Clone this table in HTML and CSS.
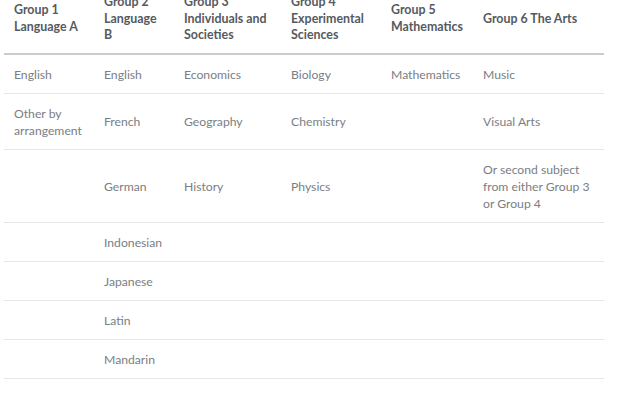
FILE: index.html
```html
<!DOCTYPE html>
<html lang="en">
<head>
<meta charset="utf-8">
<title>IB Subjects</title>
<link rel="stylesheet" href="styles.css">
</head>
<body>
<div class="page">
<table class="subjects">
  <thead>
    <tr>
      <th class="c1">Group 1 Language A</th>
      <th class="c2">Group 2 Language B</th>
      <th class="c3">Group 3 Individuals and Societies</th>
      <th class="c4">Group 4 Experimental Sciences</th>
      <th class="c5">Group 5 Mathematics</th>
      <th class="c6">Group 6 The Arts</th>
    </tr>
  </thead>
  <tbody>
    <tr><td>English</td><td>English</td><td>Economics</td><td>Biology</td><td>Mathematics</td><td>Music</td></tr>
    <tr><td>Other by arrangement</td><td>French</td><td>Geography</td><td>Chemistry</td><td></td><td>Visual Arts</td></tr>
    <tr><td></td><td>German</td><td>History</td><td>Physics</td><td></td><td>Or second subject from either Group 3 or Group 4</td></tr>
    <tr><td></td><td>Indonesian</td><td></td><td></td><td></td><td></td></tr>
    <tr><td></td><td>Japanese</td><td></td><td></td><td></td><td></td></tr>
    <tr><td></td><td>Latin</td><td></td><td></td><td></td><td></td></tr>
    <tr><td></td><td>Mandarin</td><td></td><td></td><td></td><td></td></tr>
  </tbody>
</table>
</div>
</body>
</html>
```

FILE: styles.css
```css
html, body {
  margin: 0;
  padding: 0;
  background: #ffffff;
}
.page {
  padding: 0 16px 0 4px;
  overflow: hidden;
  height: 394px;
}
.subjects {
  width: 600px;
  margin-top: -17px;
  border-collapse: collapse;
  table-layout: fixed;
  font-family: "Lato", "Open Sans", sans-serif;
  font-size: 12.2px;
  line-height: 17px;
}
.subjects th,
.subjects td {
  box-sizing: border-box;
  text-align: left;
  vertical-align: middle;
  padding: 11px 10px 10px;
}
.subjects th {
  font-weight: 700;
  font-size: 12.4px;
  color: #555a60;
  line-height: 16.5px;
  padding-bottom: 9px;
  border-bottom: 2px solid #cbcbcb;
}
.subjects td {
  color: #7a7e83;
  border-bottom: 1px solid #e6e6e6;
}
.c1 { width: 90px; }
.c2 { width: 80px; }
.c3 { width: 107px; }
.c4 { width: 100px; }
.c5 { width: 92px; }
.c6 { width: 131px; }
```
